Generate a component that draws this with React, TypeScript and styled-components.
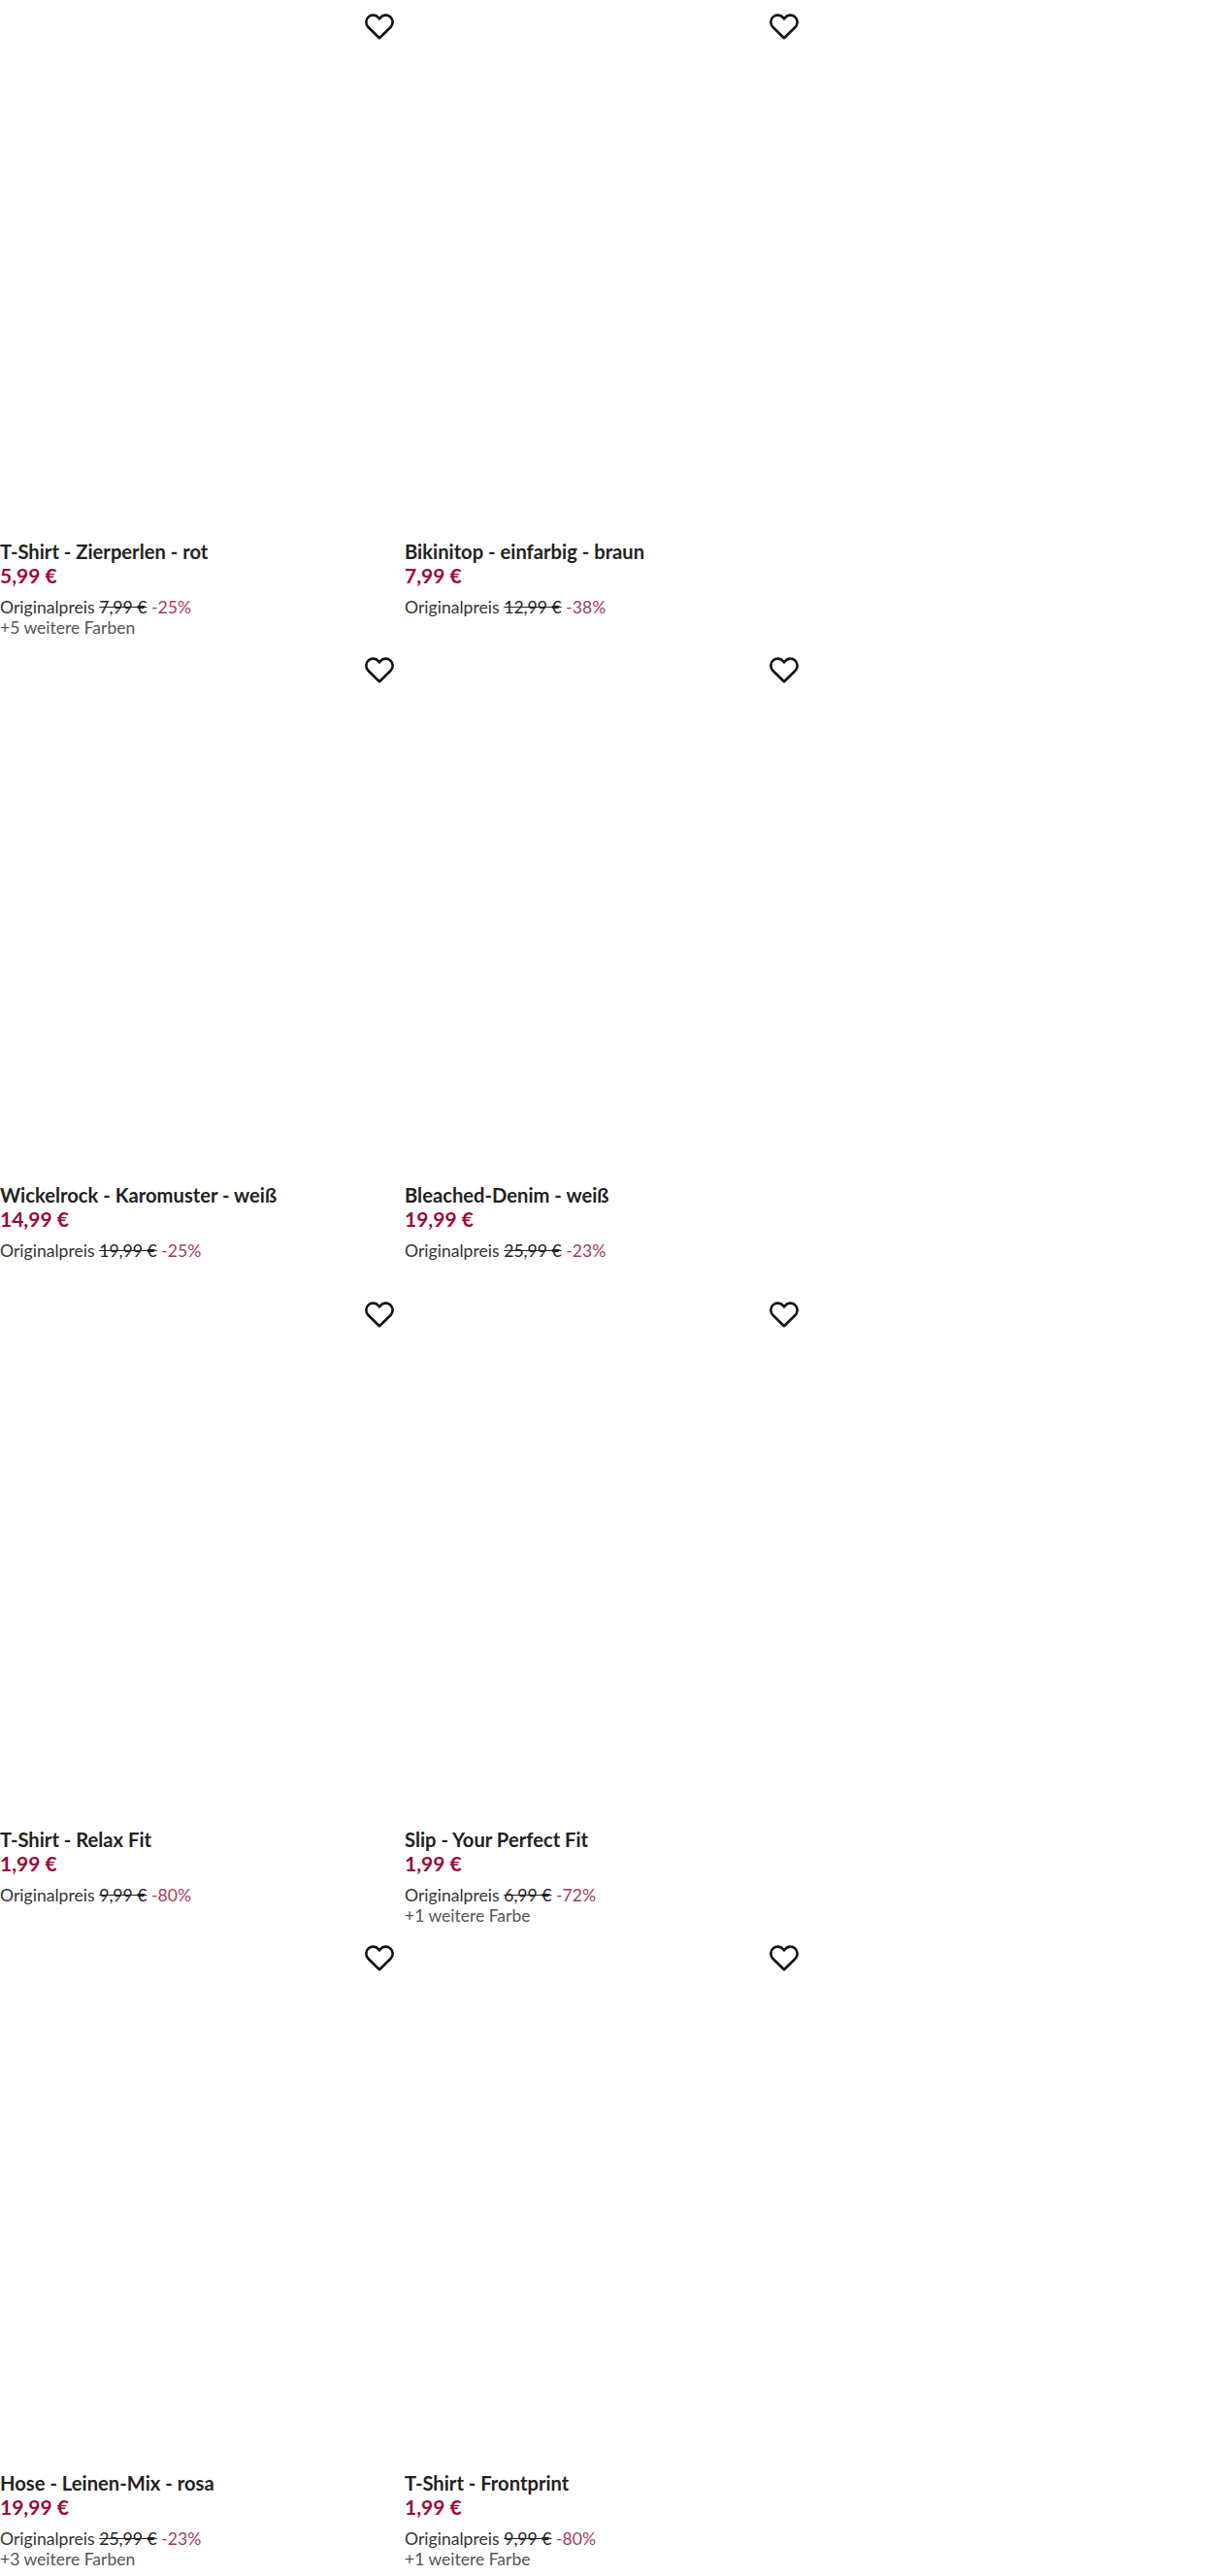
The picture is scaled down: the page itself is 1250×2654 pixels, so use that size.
import React from 'react';
import styled, { createGlobalStyle } from 'styled-components';

const GlobalStyle = createGlobalStyle`
  html, body {
    margin: 0;
    padding: 0;
    background: #fff;
  }
`;

const Grid = styled.div`
  display: grid;
  grid-template-columns: repeat(2, 406px);
  grid-auto-rows: 663.33px;
  column-gap: 11px;
  width: 1250px;
  height: 2654px;
  overflow: hidden;
  font-family: Lato, 'Open Sans', sans-serif;
`;

const Card = styled.article`
  display: flex;
  flex-direction: column;
`;

const ImageArea = styled.div`
  display: flex;
  justify-content: flex-end;
  align-items: flex-start;
  height: 555px;
  padding-top: 14px;
  box-sizing: border-box;
  flex: none;
`;

const Title = styled.div`
  font-size: 20.2px;
  line-height: 26px;
  font-weight: 700;
  color: #222;
`;

const Price = styled.div`
  font-size: 21px;
  line-height: 24px;
  font-weight: 700;
  color: #9a0a3c;
`;

const OriginalRow = styled.div`
  margin-top: 9px;
  font-size: 17.6px;
  line-height: 24px;
  color: #333;
`;

const Struck = styled.span`
  text-decoration: line-through;
  color: #222;
`;

const Discount = styled.span`
  color: #a23a63;
`;

const MoreColors = styled.div`
  font-size: 17.5px;
  line-height: 18px;
  color: #555;
`;

const Heart = () => (
  <svg width="30" height="27" viewBox="0 0 30 27" fill="none" aria-hidden="true">
    <path
      d="M15 25.2 3.5 14C.5 11 .6 6.2 3.7 3.4c3-2.6 7.6-2.3 10.2.7L15 5.4l1.1-1.3c2.6-3 7.2-3.3 10.2-.7 3.1 2.8 3.2 7.6.2 10.6L15 25.2Z"
      stroke="#111"
      strokeWidth="2.6"
      strokeLinejoin="round"
    />
  </svg>
);

type Product = {
  title: string;
  price: string;
  original: string;
  discount: string;
  more?: string;
};

const products: Product[] = [
  { title: 'T-Shirt - Zierperlen - rot', price: '5,99 €', original: '7,99 €', discount: '-25%', more: '+5 weitere Farben' },
  { title: 'Bikinitop - einfarbig - braun', price: '7,99 €', original: '12,99 €', discount: '-38%' },
  { title: 'Wickelrock - Karomuster - weiß', price: '14,99 €', original: '19,99 €', discount: '-25%' },
  { title: 'Bleached-Denim - weiß', price: '19,99 €', original: '25,99 €', discount: '-23%' },
  { title: 'T-Shirt - Relax Fit', price: '1,99 €', original: '9,99 €', discount: '-80%' },
  { title: 'Slip - Your Perfect Fit', price: '1,99 €', original: '6,99 €', discount: '-72%', more: '+1 weitere Farbe' },
  { title: 'Hose - Leinen-Mix - rosa', price: '19,99 €', original: '25,99 €', discount: '-23%', more: '+3 weitere Farben' },
  { title: 'T-Shirt - Frontprint', price: '1,99 €', original: '9,99 €', discount: '-80%', more: '+1 weitere Farbe' },
];

export default function App() {
  return (
    <>
      <GlobalStyle />
      <Grid>
        {products.map((p) => (
          <Card key={p.title}>
            <ImageArea>
              <Heart />
            </ImageArea>
            <Title>{p.title}</Title>
            <Price>{p.price}</Price>
            <OriginalRow>
              Originalpreis <Struck>{p.original}</Struck> <Discount>{p.discount}</Discount>
            </OriginalRow>
            {p.more && <MoreColors>{p.more}</MoreColors>}
          </Card>
        ))}
      </Grid>
    </>
  );
}
